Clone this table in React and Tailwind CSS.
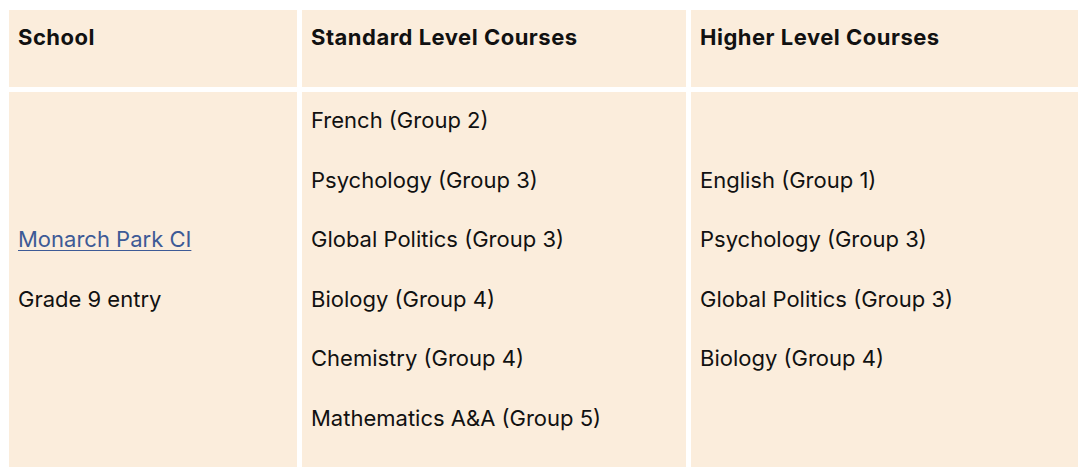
import React from 'react';

const standard = [
  'French (Group 2)',
  'Psychology (Group 3)',
  'Global Politics (Group 3)',
  'Biology (Group 4)',
  'Chemistry (Group 4)',
  'Mathematics A&A (Group 5)',
];

const higher = [
  'English (Group 1)',
  'Psychology (Group 3)',
  'Global Politics (Group 3)',
  'Biology (Group 4)',
];

const Line = ({ children }) => <div className="leading-[56.5px] pb-[3px] whitespace-nowrap">{children}</div>;

const Head = ({ children }) => (
  <div className="bg-[#fbeddc] h-[77px] px-[9px] pt-[12px] leading-[30px] font-bold tracking-[0.5px]">{children}</div>
);

const Body = ({ children }) => (
  <div className="bg-[#fbeddc] px-[9px] pb-[18px] flex flex-col justify-center">{children}</div>
);

export default function App() {
  return (
    <div className="w-[1080px] h-[471px] bg-white pl-[9px] pt-[10px] overflow-hidden text-[22px] text-[#111] font-['Inter',sans-serif]">
      <div className="grid grid-cols-[288px_384px_387px] gap-[5px]">
        <Head>School</Head>
        <Head>Standard Level Courses</Head>
        <Head>Higher Level Courses</Head>

        <Body>
          <Line>
            <a href="#" className="text-[#3d5a96] underline underline-offset-[3px] decoration-1">Monarch Park CI</a>
          </Line>
          <Line>Grade 9 entry</Line>
        </Body>
        <Body>
          {standard.map((s) => (
            <Line key={s}>{s}</Line>
          ))}
        </Body>
        <Body>
          {higher.map((s) => (
            <Line key={s}>{s}</Line>
          ))}
        </Body>
      </div>
    </div>
  );
}
